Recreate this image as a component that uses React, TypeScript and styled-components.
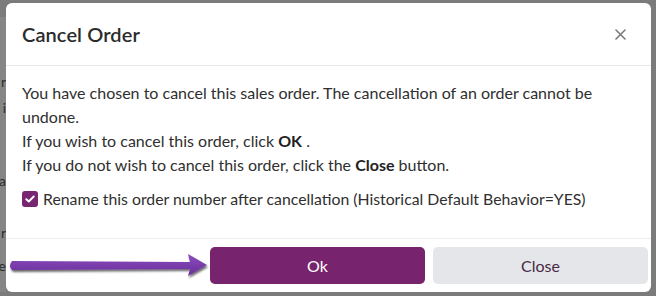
import React from "react";
import styled, { createGlobalStyle } from "styled-components";

const GlobalStyle = createGlobalStyle`
  html, body {
    margin: 0;
    padding: 0;
    background: #7b7b7b;
    font-family: Lato, "Open Sans", Arial, sans-serif;
  }
`;

const Stage = styled.div`
  position: relative;
  width: 656px;
  height: 296px;
  box-sizing: border-box;
  padding: 3px 5px 4px 0;
  display: flex;
  overflow: hidden;
  background: #7b7b7b;
`;

const PageEdge = styled.div`
  width: 6px;
  overflow: hidden;
  display: flex;
  flex-direction: column;
  align-items: flex-end;
  padding-top: 56px;
  font-size: 14px;
  color: #2e2e2e;
  background: #858585;
  margin-top: 14px;
`;

const EdgeLetter = styled.span<{ $gap: number }>`
  display: block;
  line-height: 18px;
  margin-bottom: ${(p) => p.$gap}px;
`;

const Modal = styled.div`
  flex: 1;
  background: #fff;
  border-radius: 6px;
  display: flex;
  flex-direction: column;
  color: #2f2f2f;
`;

const Header = styled.div`
  height: 63px;
  box-sizing: border-box;
  padding: 0 24px 0 16px;
  display: flex;
  align-items: center;
  justify-content: space-between;
  border-bottom: 1px solid #e6e6e6;
`;

const Title = styled.h2`
  margin: 0;
  font-size: 20px;
  font-weight: 600;
  color: #2b2b2b;
  letter-spacing: 0.1px;
`;

const CloseX = styled.button`
  border: 0;
  background: none;
  padding: 0;
  width: 14px;
  height: 14px;
  display: flex;
  align-items: center;
  justify-content: center;
  cursor: pointer;
`;

const Body = styled.div`
  padding: 15px 16px 0 16px;
  font-size: 16px;
  line-height: 24px;
  color: #2f2f2f;
  flex: 1;
`;

const Line = styled.div``;

const Strong = styled.b`
  font-weight: 700;
  color: #222;
`;

const CheckRow = styled.label`
  display: flex;
  align-items: center;
  gap: 5px;
  margin-top: 10px;
  font-size: 15.8px;
`;

const CheckBox = styled.span`
  width: 16px;
  height: 16px;
  border-radius: 3px;
  background: #782572;
  display: flex;
  align-items: center;
  justify-content: center;
`;

const Footer = styled.div`
  border-top: 1px solid #eeeeee;
  padding: 8px 3px 8px 0;
  display: flex;
  justify-content: flex-end;
  gap: 8px;
`;

const Button = styled.button<{ $primary?: boolean }>`
  width: 215px;
  height: 37px;
  border: 0;
  border-radius: 5px;
  font-family: inherit;
  font-size: 16px;
  background: ${(p) => (p.$primary ? "#77236d" : "#e4e6ea")};
  color: ${(p) => (p.$primary ? "#ffffff" : "#4a2a45")};
  cursor: pointer;
`;

const Arrow = styled.svg`
  position: absolute;
  left: 8px;
  top: 250px;
  overflow: visible;
`;

export default function App() {
  return (
    <>
      <GlobalStyle />
      <Stage>
        <PageEdge>
          <EdgeLetter $gap={8}>r</EdgeLetter>
          <EdgeLetter $gap={55}>i</EdgeLetter>
          <EdgeLetter $gap={34}>a</EdgeLetter>
          <EdgeLetter $gap={15}>r</EdgeLetter>
          <EdgeLetter $gap={0}>e</EdgeLetter>
        </PageEdge>
        <Modal>
          <Header>
            <Title>Cancel Order</Title>
            <CloseX aria-label="Close">
              <svg width="11" height="11" viewBox="0 0 11 11">
                <path d="M1 1 L10 10 M10 1 L1 10" stroke="#7a7a7a" strokeWidth="1.6" strokeLinecap="round" />
              </svg>
            </CloseX>
          </Header>
          <Body>
            <Line>
              You have chosen to cancel this sales order. The cancellation of an order cannot be undone.
            </Line>
            <Line>
              If you wish to cancel this order, click <Strong>OK</Strong> .
            </Line>
            <Line>
              If you do not wish to cancel this order, click the <Strong>Close</Strong> button.
            </Line>
            <CheckRow>
              <CheckBox>
                <svg width="10" height="8" viewBox="0 0 10 8">
                  <path d="M1.3 4.2 L3.8 6.5 L8.7 1.5" stroke="#fff" strokeWidth="1.9" fill="none" strokeLinecap="round" strokeLinejoin="round" />
                </svg>
              </CheckBox>
              Rename this order number after cancellation (Historical Default Behavior=YES)
            </CheckRow>
          </Body>
          <Footer>
            <Button $primary>Ok</Button>
            <Button>Close</Button>
          </Footer>
        </Modal>
        <Arrow width="200" height="30" viewBox="0 0 200 30">
          <defs>
            <linearGradient id="arrowFill" x1="0" y1="0" x2="0" y2="1">
              <stop offset="0" stopColor="#8a4cc0" />
              <stop offset="1" stopColor="#6a2f99" />
            </linearGradient>
            <filter id="arrowShadow" x="-10%" y="-50%" width="120%" height="200%">
              <feDropShadow dx="1" dy="2" stdDeviation="1.2" floodColor="#000" floodOpacity="0.6" />
            </filter>
          </defs>
          <path
            d="M4 11 L182 12 L180 4 L199 15 L180 26 L182 19 L4 20 Q0 15.5 4 11 Z"
            fill="url(#arrowFill)"
            filter="url(#arrowShadow)"
          />
        </Arrow>
      </Stage>
    </>
  );
}
